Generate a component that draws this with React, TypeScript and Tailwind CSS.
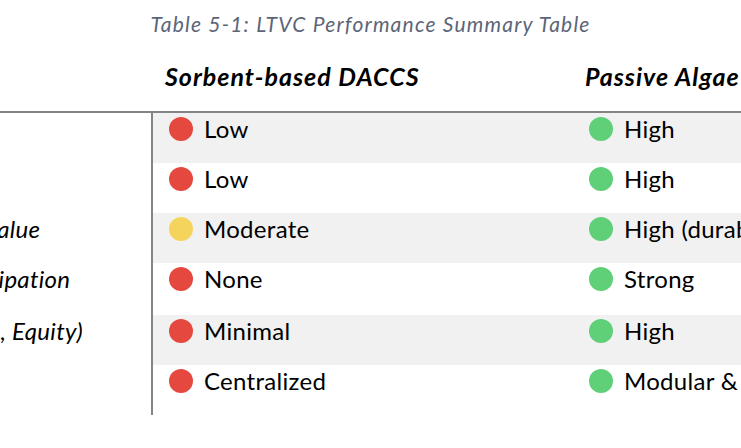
import React from 'react';

type Level = 'red' | 'yellow' | 'green';

interface Row {
  label: string;
  sorbent: [Level, string];
  algae: [Level, string];
  height: string;
  shade: boolean;
}

const DOT: Record<Level, string> = {
  red: 'bg-[#e5483f]',
  yellow: 'bg-[#f5d45e]',
  green: 'bg-[#5fcf78]',
};

const ROWS: Row[] = [
  { label: 'Cost', sorbent: ['red', 'Low'], algae: ['green', 'High'], height: 'h-[50px]', shade: true },
  { label: 'Energy', sorbent: ['red', 'Low'], algae: ['green', 'High'], height: 'h-[50px]', shade: false },
  { label: 'Economic Value', sorbent: ['yellow', 'Moderate'], algae: ['green', 'High (durable)'], height: 'h-[50px]', shade: true },
  { label: 'Local Participation', sorbent: ['red', 'None'], algae: ['green', 'Strong'], height: 'h-[52px]', shade: false },
  { label: 'Fair (Justice, Equity)', sorbent: ['red', 'Minimal'], algae: ['green', 'High'], height: 'h-[50px]', shade: true },
  { label: 'Scale', sorbent: ['red', 'Centralized'], algae: ['green', 'Modular & distributed'], height: 'h-[50px]', shade: false },
];

const Cell: React.FC<{ value: [Level, string] }> = ({ value }) => (
  <div className="w-[420px] shrink-0 pl-4">
    <div className="flex h-8 items-center gap-[11px] whitespace-nowrap">
      <span className={`h-6 w-6 shrink-0 rounded-full ${DOT[value[0]]}`} />
      <span>{value[1]}</span>
    </div>
  </div>
);

export default function App() {
  return (
    <div
      className="h-[448px] w-[741px] overflow-hidden bg-white text-black"
      style={{ fontFamily: 'Lato, "Noto Sans", sans-serif' }}
    >
      <p className="pt-[9px] text-center text-[21px] italic leading-[30px] tracking-[1.2px] text-[#5b6578]">
        Table 5-1: LTVC Performance Summary Table
      </p>

      <div className="ml-[-120px] w-[1300px]">
        {/* header */}
        <div className="flex h-[74px] items-center border-b-2 border-[#858585] text-[25px] font-bold italic tracking-[1px]">
          <div className="w-[273px] shrink-0" />
          <div className="w-[420px] shrink-0 pl-3 pt-1">Sorbent-based DACCS</div>
          <div className="w-[420px] shrink-0 pl-3 pt-1">Passive Algae Cultivation</div>
        </div>

        {ROWS.map((row) => (
          <div key={row.label} className={`flex text-[24px] tracking-[0.3px] ${row.height}`}>
            <div className="w-[273px] shrink-0 border-r-2 border-[#858585] bg-white">
              <div className="flex h-8 items-center whitespace-nowrap italic">{row.label}</div>
            </div>
            <div className={`flex flex-1 ${row.shade ? 'bg-[#f1f1f1]' : 'bg-white'}`}>
              <Cell value={row.sorbent} />
              <Cell value={row.algae} />
            </div>
          </div>
        ))}
      </div>
    </div>
  );
}
